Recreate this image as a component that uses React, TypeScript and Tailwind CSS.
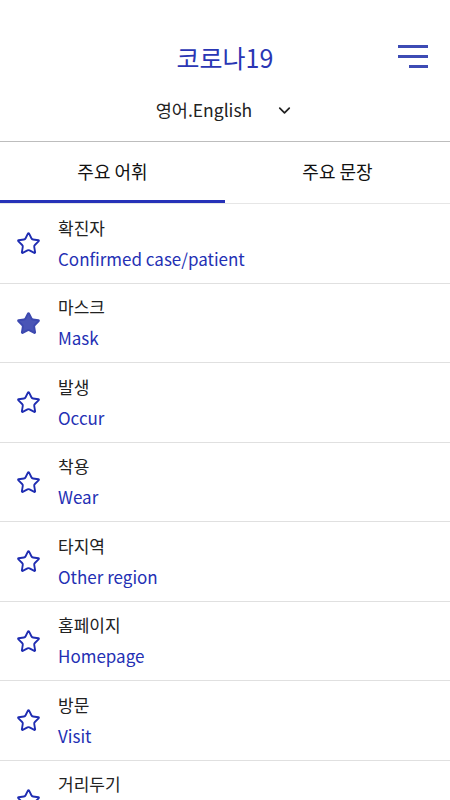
import React from "react";
import { Star, ChevronDown } from "lucide-react";

const words = [
  { ko: "확진자", en: "Confirmed case/patient", fav: false },
  { ko: "마스크", en: "Mask", fav: true },
  { ko: "발생", en: "Occur", fav: false },
  { ko: "착용", en: "Wear", fav: false },
  { ko: "타지역", en: "Other region", fav: false },
  { ko: "홈페이지", en: "Homepage", fav: false },
  { ko: "방문", en: "Visit", fav: false },
  { ko: "거리두기", en: "Distancing", fav: false },
];

const font = { fontFamily: '"Noto Sans CJK KR", "Noto Sans", sans-serif' };

export default function App() {
  return (
    <div className="h-[800px] w-[450px] overflow-hidden bg-white" style={font}>
      <header className="relative h-[142px] border-b border-[#bdbdbd] pt-[40px]">
        <div className="flex h-[36px] items-center justify-center">
          <h1 className="text-[25px] font-normal text-[#2a36b4]">코로나19</h1>
        </div>
        <button className="absolute right-[22px] top-[45px] flex w-[30px] flex-col items-end gap-[7px]">
          <span className="block h-[3px] w-[30px] bg-[#3d4bb4]" />
          <span className="block h-[3px] w-[30px] bg-[#3d4bb4]" />
          <span className="block h-[3px] w-[19px] bg-[#3d4bb4]" />
        </button>
        <div className="mt-[20px] flex h-[28px] items-center justify-center gap-[23px]">
          <span className="text-[17.5px] text-[#222]">영어.English</span>
          <ChevronDown size={19} strokeWidth={2.2} className="text-[#222]" />
        </div>
      </header>

      <nav className="flex h-[62px] border-b border-[#e6e6e6]">
        <div className="flex flex-1 flex-col">
          <div className="flex flex-1 items-center justify-center text-[18px] text-[#111]">주요 어휘</div>
          <div className="h-[3px] bg-[#2632b8]" />
        </div>
        <div className="flex flex-1 items-center justify-center pb-[3px] text-[18px] text-[#111]">주요 문장</div>
      </nav>

      <ul>
        {words.map((w) => (
          <li key={w.ko} className="flex h-[79.5px] items-center border-b border-[#e0e0e0]">
            <div className="flex w-[58px] items-center justify-center pr-[2px] pt-[1px]">
              {w.fav ? (
                <Star size={25} strokeWidth={1.8} className="fill-[#4a55b6] text-[#3d49b0]" />
              ) : (
                <Star size={25} strokeWidth={1.8} className="text-[#1f2db2]" />
              )}
            </div>
            <div className="flex flex-col pt-[1px]">
              <span className="text-[17px] leading-[24px] text-[#222]">{w.ko}</span>
              <span className="mt-[6px] text-[17px] leading-[26px] text-[#2430b4]">{w.en}</span>
            </div>
          </li>
        ))}
      </ul>
    </div>
  );
}
